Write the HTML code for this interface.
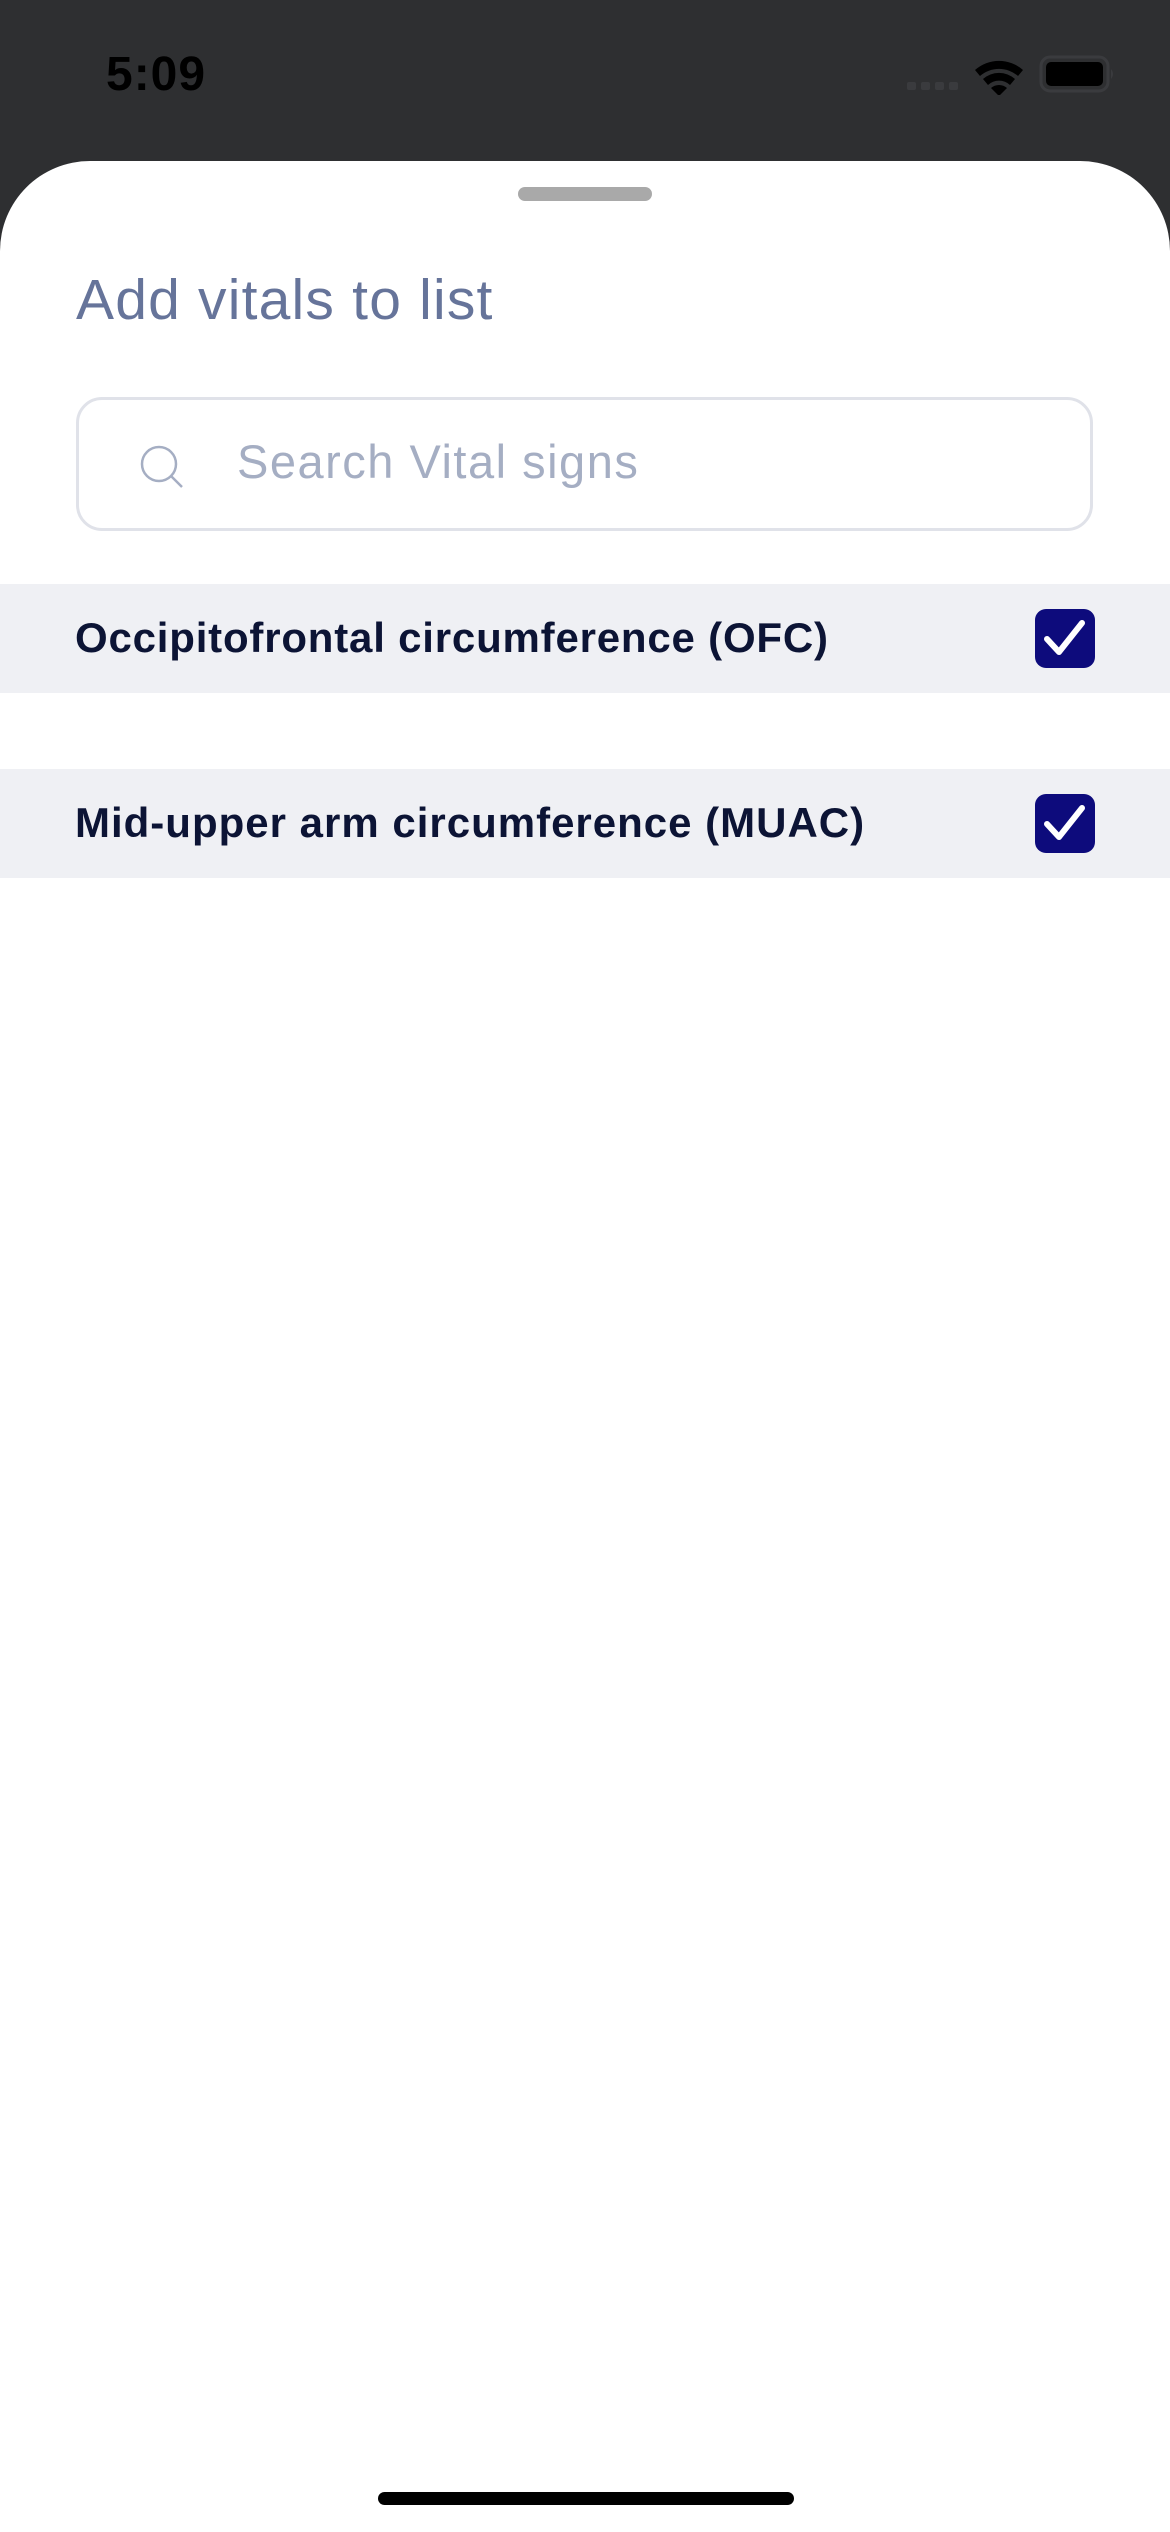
<!DOCTYPE html>
<html><head><meta charset="utf-8"><style>
*{margin:0;padding:0;box-sizing:border-box}
body{width:1170px;height:2532px;background:#2e2f31;position:relative;overflow:hidden;font-family:"Liberation Sans",sans-serif}
.time{position:absolute;left:106px;top:47px;font-size:48px;font-weight:bold;color:#000;letter-spacing:1px}
.sheet{position:absolute;left:0;top:161px;width:1170px;height:2371px;background:#fff;border-radius:90px 90px 0 0}
.handle{position:absolute;left:518px;top:187px;width:134px;height:14px;border-radius:7px;background:#a9a9a9}
.title{position:absolute;left:76px;top:267px;font-size:57px;color:#66749a;letter-spacing:1.2px}
.search{position:absolute;left:76px;top:397px;width:1017px;height:134px;border:3px solid #e0e2e9;border-radius:26px}
.ph{position:absolute;left:237px;top:434px;font-size:47px;color:#a5aec3;letter-spacing:1.5px}
.row{position:absolute;left:0;width:1170px;height:109px;background:#eff0f4}
.row span{position:absolute;left:75px;top:30px;font-size:42px;font-weight:bold;color:#0c1435;letter-spacing:0.8px}
.cb{position:absolute;left:1035px;top:25px;width:60px;height:59px;border-radius:11px;background:#0d0b7c}
.home{position:absolute;left:378px;top:2492px;width:416px;height:13px;border-radius:7px;background:#000}
</style></head><body>
<div class="time">5:09</div>
<svg style="position:absolute;left:905px;top:55px" width="212" height="40" viewBox="905 55 212 40">
<g fill="#3a3b3e"><rect x="907" y="82" width="9" height="8" rx="2"/><rect x="921" y="82" width="9" height="8" rx="2"/><rect x="935" y="82" width="9" height="8" rx="2"/><rect x="949" y="82" width="9" height="8" rx="2"/></g>
<path d="M975 70 A36 36 0 0 1 1023 70 L1018 76 A29 29 0 0 0 980 76Z M983 79 A24 24 0 0 1 1015 79 L1010 85 A16 16 0 0 0 988 85Z M991 88 A12 12 0 0 1 1007 88 L999 96Z" fill="#000"/>
<rect x="1041" y="57" width="67" height="34" rx="9" fill="none" stroke="#3a3b3e" stroke-width="3"/>
<rect x="1046" y="62" width="57" height="24" rx="5" fill="#000"/>
<path d="M1111 69 Q1115 74 1111 79Z" fill="#3a3b3e"/>
</svg>
<div class="sheet"></div>
<div class="handle"></div>
<div class="title">Add vitals to list</div>
<div class="search"></div>
<svg style="position:absolute;left:138px;top:443px" width="48" height="48" viewBox="0 0 48 48"><circle cx="21" cy="21" r="17" fill="none" stroke="#a5aec3" stroke-width="2.5"/><path d="M33 33 L44 44" stroke="#a5aec3" stroke-width="2.5"/></svg>
<div class="ph">Search Vital signs</div>
<div class="row" style="top:584px"><span>Occipitofrontal circumference (OFC)</span><div class="cb"><svg width="60" height="59" viewBox="0 0 60 59"><path d="M12 30 L24 43 L47 14" fill="none" stroke="#fff" stroke-width="6" stroke-linecap="round" stroke-linejoin="round"/></svg></div></div>
<div class="row" style="top:769px"><span style="letter-spacing:1.0px">Mid-upper arm circumference (MUAC)</span><div class="cb"><svg width="60" height="59" viewBox="0 0 60 59"><path d="M12 30 L24 43 L47 14" fill="none" stroke="#fff" stroke-width="6" stroke-linecap="round" stroke-linejoin="round"/></svg></div></div>
<div class="home"></div>
</body></html>
